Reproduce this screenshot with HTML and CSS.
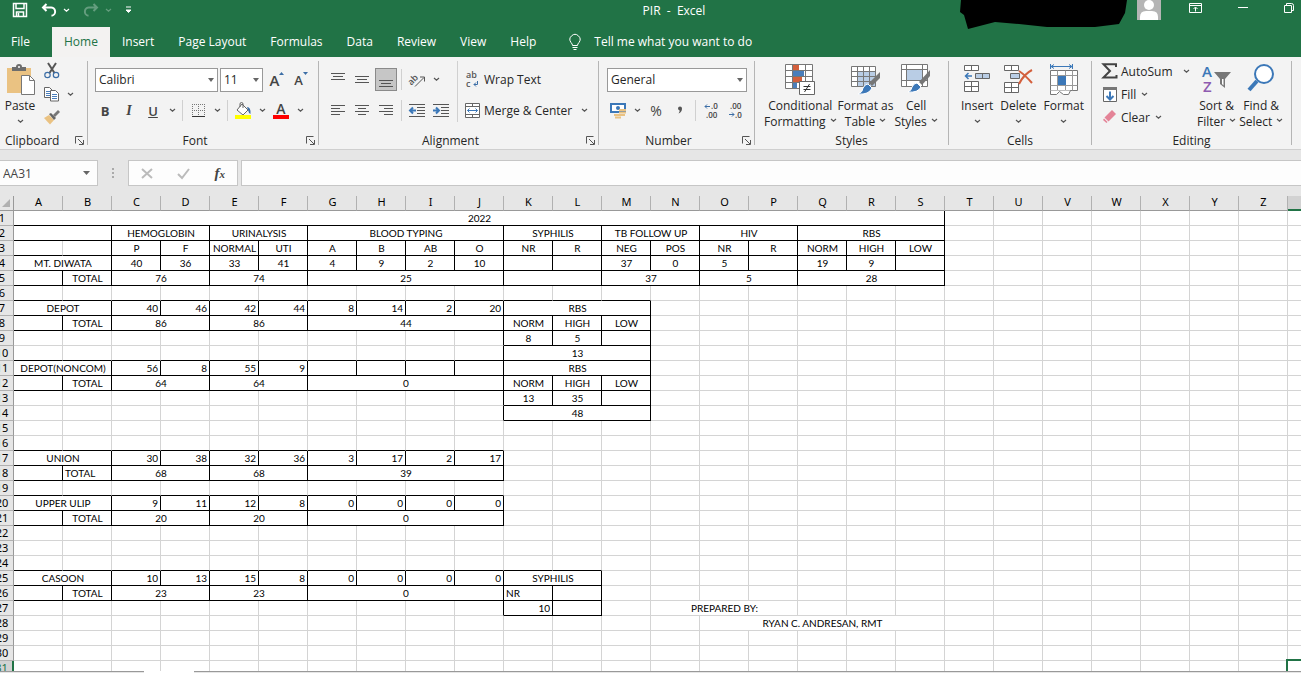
FILE: index.html
```html
<!DOCTYPE html>
<html lang="en">

<head>
    <meta charset="UTF-8">
    <meta name="viewport" content="width=device-width, initial-scale=1.0">
    <title>PIR - Excel</title>
    <link rel="stylesheet" href="styles.css">
</head>

<body>
    <svg class="defs" aria-hidden="true">
        <symbol id="chev" viewBox="0 0 7 5"><path d="M1 1l2.500 2.200L6 1" fill="none" stroke="currentColor" stroke-width="1.200"/></symbol>
        <symbol id="launch" viewBox="0 0 9 9"><path d="M.5 7.500V.5h7M3 3l5 5M8.500 4v4.500H4" fill="none" stroke="#555"/></symbol>
    </svg>

    <header class="titlebar">
        <div class="quick">
            <button class="quick-btn" aria-label="Save"><svg width="16" height="16" viewBox="0 0 16 16"><path d="M1.500 1.500h13v13h-13zM4 1.500v5h8v-5M4.500 14.500V10h7v4.500M6.500 11v3" fill="none" stroke="#fff" stroke-width="1.500"/></svg></button>
            <button class="quick-btn" aria-label="Undo"><svg width="16" height="14" viewBox="0 0 16 14"><path d="M5.500 1L2 4.500 5.500 8M2 4.500h7.500a4 4 0 0 1 1 8.200" fill="none" stroke="#fff" stroke-width="2"/></svg><svg class="chev"><use href="#chev"/></svg></button>
            <button class="quick-btn faded" aria-label="Redo"><svg width="16" height="14" viewBox="0 0 16 14"><path d="M10.500 1L14 4.500 10.500 8M14 4.500H6.500a4 4 0 0 0-1 8.200" fill="none" stroke="#fff" stroke-width="2"/></svg><svg class="chev"><use href="#chev"/></svg></button>
            <button class="quick-btn" aria-label="Customize toolbar"><svg width="7" height="8" viewBox="0 0 7 8"><path d="M1 1h5M1 4h5L3.500 6.500z" fill="#fff" stroke="#fff"/></svg></button>
        </div>
        <h1 class="title">PIR &nbsp;-&nbsp; Excel</h1>
        <div class="account">
            <svg class="scribble" width="168" height="29" viewBox="0 0 168 29"><path d="M1 0h166l-2 13-6 11-24 3H87l-28-3-24-2-27 7-4-14-4-3z"/></svg>
            <svg class="avatar" width="24" height="20" viewBox="0 0 24 20"><path d="M0 0h24v20H0z" fill="#b5b5b5"/><circle cx="12" cy="5" r="5" fill="#fff"/><path d="M3 20v-3q0-6 6-6h6q6 0 6 6v3z" fill="#fff"/></svg>
            <button class="win-btn" aria-label="Ribbon options"><svg width="13" height="10" viewBox="0 0 13 10"><path d="M.5.500h12v9H.5zM.5 2.500h12M6.500 8.500v-4M4.500 6l2-2 2 2" fill="none" stroke="#fff"/></svg></button>
            <button class="win-btn" aria-label="Minimize"><svg width="10" height="10" viewBox="0 0 10 10"><path d="M0 4.500h10" stroke="#fff"/></svg></button>
            <button class="win-btn" aria-label="Restore"><svg width="10" height="10" viewBox="0 0 10 10"><path d="M.5 2.500h7v7h-7zM2.500 2.500v-2h5q2 0 2 2v5h-2" fill="none" stroke="#fff"/></svg></button>
        </div>
    </header>

    <nav class="tabs">
        <a class="tab tab-file" href="#">File</a>
        <a class="tab active" href="#">Home</a>
        <a class="tab" href="#">Insert</a>
        <a class="tab" href="#">Page Layout</a>
        <a class="tab" href="#">Formulas</a>
        <a class="tab" href="#">Data</a>
        <a class="tab" href="#">Review</a>
        <a class="tab" href="#">View</a>
        <a class="tab" href="#">Help</a>
        <a class="tab tell" href="#"><svg width="12" height="16" viewBox="0 0 12 16"><path d="M3.500 11.500q0-1.500-1.500-3a5 5 0 1 1 8 0q-1.500 1.500-1.500 3zM3.500 13.500h5M4.500 15.500h3" fill="none" stroke="#fff"/></svg>Tell me what you want to do</a>
    </nav>

    <section class="ribbon">
        <div class="group clipboard">
            <div class="group-body">
                <button class="big"><svg width="30" height="32" viewBox="-1 0 30 32"><path d="M1 4h24v25H1z" fill="#eac282"/><path d="M6 7V3h4q0-3 3-3t3 3h4v4z" fill="#6d6d6d"/><circle cx="13" cy="3" r="1" fill="#fff"/><path d="M15.500 11.500h8l5 5v14h-13z" fill="#fff" stroke="#777"/><path d="M23.500 11.500v5h5" fill="none" stroke="#777"/></svg><span>Paste</span><svg class="chev"><use href="#chev"/></svg></button>
                <div class="stack">
                    <button class="ico" aria-label="Cut"><svg width="16" height="16" viewBox="0 0 16 16"><path d="M4 0l6.500 10M12 0L5.500 10" stroke="#555" stroke-width="2" fill="none"/><circle cx="3.500" cy="12" r="2.700" fill="none" stroke="#3c6ea6" stroke-width="1.200"/><circle cx="12" cy="12" r="2.700" fill="none" stroke="#3c6ea6" stroke-width="1.200"/></svg></button>
                    <button class="ico" aria-label="Copy"><svg width="16" height="15" viewBox="0 0 16 15"><path d="M.5.500h5l3 3v7h-8z" fill="#fff" stroke="#666"/><path d="M2 4.500h4M2 6.500h4M2 8.500h4" stroke="#4a7ebb"/><path d="M6.500 3.500h5l3 3v7.500h-8z" fill="#fff" stroke="#666"/><path d="M8 7.500h5M8 9.500h5M8 11.500h5" stroke="#4a7ebb"/></svg><svg class="chev"><use href="#chev"/></svg></button>
                    <button class="ico" aria-label="Format Painter"><svg width="16" height="15" viewBox="0 0 16 15"><path d="M0 8l5-3 5 5-4 4.500z" fill="#eac282"/><path d="M5 4l2-1 5 5-2 2z" fill="#666"/><path d="M9 5l5-5 2 2-5 5z" fill="#777"/></svg></button>
                </div>
            </div>
            <div class="group-label"><span>Clipboard</span><button class="launcher" aria-label="Clipboard settings"><svg><use href="#launch"/></svg></button></div>
        </div>

        <div class="group font">
            <div class="group-body rows">
                <div class="row">
                    <label class="combo combo-font"><select aria-label="Font"><option>Calibri</option></select></label>
                    <label class="combo combo-size"><select aria-label="Font size"><option>11</option></select></label>
                    <button class="ico grow" aria-label="Increase font size"><b>A</b><svg width="5" height="4" viewBox="0 0 5 4"><path d="M0 3l2.500-3L5 3z" fill="#3c6ea6"/></svg></button>
                    <button class="ico grow shrink" aria-label="Decrease font size"><b>A</b><svg width="5" height="4" viewBox="0 0 5 4"><path d="M0 0h5L2.500 3z" fill="#3c6ea6"/></svg></button>
                </div>
                <div class="row">
                    <button class="ico glyph"><b>B</b></button>
                    <button class="ico glyph"><i>I</i></button>
                    <button class="ico glyph"><u>U</u></button>
                    <button class="drop" aria-label="Underline options"><svg class="chev"><use href="#chev"/></svg></button>
                    <span class="sep"></span>
                    <button class="ico" aria-label="Borders"><svg width="13" height="13" viewBox="0 0 13 13"><path d="M0 .5h13M0 6.500h13M.5 0v13M6.500 0v13M12.500 0v13" stroke="#777" stroke-dasharray="1 1"/><path d="M0 12.500h13" stroke="#333"/></svg></button>
                    <button class="drop" aria-label="Border options"><svg class="chev"><use href="#chev"/></svg></button>
                    <span class="sep"></span>
                    <button class="ico" aria-label="Fill color"><svg width="17" height="17" viewBox="0 0 17 17"><path d="M7 2l6 6-5 5-6-5z" fill="#fff" stroke="#666"/><path d="M5 5V2q0-1.500 1.500-1.500T8 2v4" fill="none" stroke="#666"/><path d="M12 5q4 0 3.500 7-2-1-2.500-4z" fill="#3c6ea6"/><path d="M0 13h16v4H0z" fill="#ff0"/></svg></button>
                    <button class="drop" aria-label="Fill color options"><svg class="chev"><use href="#chev"/></svg></button>
                    <button class="ico color" aria-label="Font color"><b>A</b></button>
                    <button class="drop" aria-label="Font color options"><svg class="chev"><use href="#chev"/></svg></button>
                </div>
            </div>
            <div class="group-label"><span>Font</span><button class="launcher" aria-label="Font settings"><svg><use href="#launch"/></svg></button></div>
        </div>

        <div class="group alignment">
            <div class="group-body">
                <div class="rows">
                    <div class="row">
                        <button class="ico" aria-label="Top align"><svg width="14" height="15" viewBox="0 0 14 15"><path d="M0 1.500h14M2 4.500h10M0 7.500h14" stroke="#555"/></svg></button>
                        <button class="ico" aria-label="Middle align"><svg width="14" height="15" viewBox="0 0 14 15"><path d="M0 4.500h14M2 7.500h10M0 10.500h14" stroke="#555"/></svg></button>
                        <button class="ico pressed" aria-label="Bottom align"><svg width="14" height="15" viewBox="0 0 14 15"><path d="M0 8.500h14M2 11.500h10M0 14.500h14" stroke="#555"/></svg></button>
                        <span class="sep"></span>
                        <button class="ico" aria-label="Orientation"><svg width="17" height="15" viewBox="0 0 17 15"><text x="-1" y="10" class="abc" transform="rotate(-45 5 8)">ab</text><path d="M6 14.500l9-9M11 5h4.500v4.500" fill="none" stroke="#555"/></svg></button>
                        <button class="drop" aria-label="Orientation options"><svg class="chev"><use href="#chev"/></svg></button>
                    </div>
                    <div class="row">
                        <button class="ico" aria-label="Align left"><svg width="14" height="11" viewBox="0 0 14 11"><path d="M0 .5h14M0 3.500h9M0 6.500h14M0 9.500h9" stroke="#555"/></svg></button>
                        <button class="ico" aria-label="Center"><svg width="14" height="11" viewBox="0 0 14 11"><path d="M0 .5h14M3 3.500h8M0 6.500h14M3 9.500h8" stroke="#555"/></svg></button>
                        <button class="ico" aria-label="Align right"><svg width="14" height="11" viewBox="0 0 14 11"><path d="M0 .5h14M5 3.500h9M0 6.500h14M5 9.500h9" stroke="#555"/></svg></button>
                        <span class="sep"></span>
                        <button class="ico" aria-label="Decrease indent"><svg width="16" height="13" viewBox="0 0 16 13"><path d="M0 .5h16M8 3.500h8M8 6.500h8M8 9.500h8M0 12.500h16" stroke="#555"/><path d="M7 6.500H1M4 3.500l-3 3 3 3" fill="none" stroke="#3c78b8" stroke-width="2"/></svg></button>
                        <button class="ico" aria-label="Increase indent"><svg width="16" height="13" viewBox="0 0 16 13"><path d="M0 .5h16M8 3.500h8M8 6.500h8M8 9.500h8M0 12.500h16" stroke="#555"/><path d="M0 6.500h6M3 3.500l3 3-3 3" fill="none" stroke="#3c78b8" stroke-width="2"/></svg></button>
                    </div>
                </div>
                <div class="rows wraps">
                    <button class="text-btn row"><svg width="16" height="17" viewBox="0 0 16 17"><text x="1" y="7" class="abc">ab</text><text x="1" y="16" class="abc">c</text><path d="M12.500 10v3.500H9M11 11.500l-2 2 2 2" fill="none" stroke="#3c6ea6"/></svg>Wrap Text</button>
                    <button class="text-btn row"><svg width="16" height="15" viewBox="0 0 16 15"><path d="M.5.500h14v14H.5zM.5 3.500h14M.5 11.500h14M7.500.500v3M7.500 11.500v3" fill="#fff" stroke="#666"/><path d="M2.500 7.500h10M4.500 5.500l-2 2 2 2M10.500 5.500l2 2-2 2" fill="none" stroke="#3c78b8"/></svg>Merge &amp; Center<svg class="chev"><use href="#chev"/></svg></button>
                </div>
            </div>
            <div class="group-label"><span>Alignment</span><button class="launcher" aria-label="Alignment settings"><svg><use href="#launch"/></svg></button></div>
        </div>

        <div class="group number">
            <div class="group-body rows">
                <div class="row">
                    <label class="combo combo-number"><select aria-label="Number format"><option>General</option></select></label>
                </div>
                <div class="row">
                    <button class="ico" aria-label="Accounting format"><svg width="17" height="16" viewBox="0 0 17 16"><path d="M1 1h14v8H1z" fill="#fff" stroke="#3c78b8" stroke-width="2"/><circle cx="8" cy="5" r="2" fill="#3c78b8"/><path d="M9 7h7M9 9.500h7M4 12h11M5 14.500h6" stroke="#eac282" stroke-width="2"/></svg></button>
                    <button class="drop" aria-label="Accounting options"><svg class="chev"><use href="#chev"/></svg></button>
                    <button class="ico percent">%</button>
                    <button class="ico" aria-label="Comma style"><svg width="6" height="9" viewBox="0 0 6 9"><path d="M1 2.500a2 2 0 1 1 4 0q0 3.500-3.500 5 1.500-2 1-3.200A2 2 0 0 1 1 2.500z" fill="#555"/></svg></button>
                    <span class="sep"></span>
                    <button class="ico" aria-label="Increase decimal"><svg width="15" height="15" viewBox="0 0 15 15"><text x="7" y="6" class="dec">.0</text><text x="2" y="15" class="dec">.00</text><path d="M6 3.500H1M3 1.500l-2 2 2 2" fill="none" stroke="#3c6ea6"/></svg></button>
                    <button class="ico" aria-label="Decrease decimal"><svg width="15" height="15" viewBox="0 0 15 15"><text x="2" y="6" class="dec">.00</text><text x="7" y="15" class="dec">.0</text><path d="M1 11.500h5M4 9.500l2 2-2 2" fill="none" stroke="#3c6ea6"/></svg></button>
                </div>
            </div>
            <div class="group-label"><span>Number</span><button class="launcher" aria-label="Number settings"><svg><use href="#launch"/></svg></button></div>
        </div>

        <div class="group styles">
            <div class="group-body">
                <button class="big"><svg width="30" height="32" viewBox="0 0 30 32"><path d="M.5.500h27v24H.5z" fill="#fff"/><path d="M8 1h6v6H8zM8 13h9v5H8z" fill="#d35f3c"/><path d="M8 7h11v6H8zM8 19h4v6H8z" fill="#4a7ebb"/><path d="M.5.500h27v24H.5zM.5 6.500h27M.5 12.500h27M.5 18.500h27M7.500.500v24M20.500.500v24" fill="none" stroke="#777"/><path d="M14.500 17.500h15v13h-15z" fill="#fff" stroke="#666"/><path d="M18.500 22.500h7M18.500 25.500h7M24.500 20l-5 8" stroke="#333"/></svg><span>Conditional<br>Formatting<svg class="chev"><use href="#chev"/></svg></span></button>
                <button class="big"><svg width="30" height="32" viewBox="0 0 30 32"><path d="M.5 2.500h24v20H.5z" fill="#fff"/><path d="M7 8h18v15H7z" fill="#b9cde5"/><path d="M.5 2.500h24v20H.5zM.5 7.500h24M.5 12.500h24M.5 17.500h24M6.500 2.500v20M12.500 2.500v20M18.500 2.500v20" fill="none" stroke="#777"/><path d="M29 8v6l-8 8-3-3z" fill="#777"/><path d="M17 20l4 4q-3 7-14 6 5-2 5-6 2-4 5-4z" fill="#3c78b8" stroke="#fff"/></svg><span>Format as<br>Table<svg class="chev"><use href="#chev"/></svg></span></button>
                <button class="big"><svg width="30" height="32" viewBox="0 0 30 32"><path d="M.5.500h26v22H.5z" fill="#fff"/><path d="M6 6h15v10H6z" fill="#b9cde5"/><path d="M.5.500h26v22H.5zM.5 5.500h26M.5 16.500h26M5.500.500v22M21.500.500v22" fill="none" stroke="#777"/><path d="M29 6v6l-8 9-3-3z" fill="#777"/><path d="M16 19l4 4q-3 6-13 5 4-2 4-5 2-4 5-4z" fill="#3c78b8" stroke="#fff"/></svg><span>Cell<br>Styles<svg class="chev"><use href="#chev"/></svg></span></button>
            </div>
            <div class="group-label"><span>Styles</span></div>
        </div>

        <div class="group cells">
            <div class="group-body">
                <button class="big"><svg width="28" height="32" viewBox="0 0 28 32"><path d="M1.500 1.500h14v5h-14zM8.500 1.500v5M1.500 17.500h14v10h-14zM8.500 17.500v10M1.500 22.500h14" fill="#fff" stroke="#666"/><path d="M12.500 9.500h14v5h-14zM19.500 9.500v5" fill="#b9cde5" stroke="#666"/><path d="M9 12H3M5.500 9L2.500 12l3 3" fill="none" stroke="#3c78b8" stroke-width="1.500"/></svg><span>Insert</span><svg class="chev"><use href="#chev"/></svg></button>
                <button class="big"><svg width="30" height="32" viewBox="0 0 30 32"><path d="M1.500 1.500h14v5h-14zM8.500 1.500v5M1.500 18.500h14v10h-14zM8.500 18.500v10M1.500 23.500h14" fill="#fff" stroke="#666"/><path d="M7.500 9.500h9v5h-9z" fill="#b9cde5" stroke="#666"/><path d="M16 7q6 4 13 12M29 6q-8 4-13 14" fill="none" stroke="#d35f3c" stroke-width="2"/></svg><span>Delete</span><svg class="chev"><use href="#chev"/></svg></button>
                <button class="big"><svg width="28" height="32" viewBox="0 0 28 32"><path d="M.5 0v5M22.500 0v5M1 2.500h21M4 .5l-3 2 3 2M19 .5l3 2-3 2" fill="none" stroke="#3c78b8"/><path d="M.5 6.500h27v20H.5z" fill="#fff" stroke="#777"/><path d="M.5 11.500h27M.5 21.500h27M7.500 6.500v20M15.500 6.500v20M22.500 6.500v20" stroke="#999"/><path d="M8 12h8v9H8z" fill="#3c78b8"/><path d="M.5 26.500v4h6l3-3 4 3h5l2-4" fill="#fff" stroke="#777"/></svg><span>Format</span><svg class="chev"><use href="#chev"/></svg></button>
            </div>
            <div class="group-label"><span>Cells</span></div>
        </div>

        <div class="group editing">
            <div class="group-body">
                <div class="edit-list">
                    <button class="text-btn sum"><svg width="16" height="16" viewBox="0 0 16 16"><path d="M14 4V1.200H1.500L8 8l-6.500 6.500H14.500V12" fill="none" stroke="#444" stroke-width="2"/></svg>AutoSum<svg class="chev"><use href="#chev"/></svg></button>
                    <button class="text-btn"><svg width="16" height="16" viewBox="0 0 16 16"><path d="M1.500 1.500h13v14h-13z" fill="#fff" stroke="#666"/><path d="M1 1h14v3H1z" fill="#777"/><path d="M8 5.500v8M4.500 10L8 13.500l3.500-3.500" fill="none" stroke="#3c78b8" stroke-width="2"/></svg>Fill<svg class="chev"><use href="#chev"/></svg></button>
                    <button class="text-btn"><svg width="16" height="16" viewBox="0 0 16 16"><path d="M10 1l4 4-7.500 7.500-4-4z" fill="#e48397"/><path d="M2 9.500l3.500 3.500-1 1-3.500-3z" fill="#e48397"/></svg>Clear<svg class="chev"><use href="#chev"/></svg></button>
                </div>
                <button class="big"><svg width="30" height="32" viewBox="0 0 30 32"><text x="0" y="13" class="az-a">A</text><text x="1" y="28" class="az-z">Z</text><path d="M12 8h17l-6 7v9l-5-4v-5z" fill="#777"/><path d="M20 15v5l1.500 1.500V15z" fill="#fff"/></svg><span>Sort &amp;<br>Filter<svg class="chev"><use href="#chev"/></svg></span></button>
                <button class="big"><svg width="28" height="32" viewBox="0 0 28 32"><circle cx="17" cy="10" r="9" fill="#fff" stroke="#3c78b8" stroke-width="2"/><path d="M10 17L2 26" stroke="#3c78b8" stroke-width="4"/></svg><span>Find &amp;<br>Select<svg class="chev"><use href="#chev"/></svg></span></button>
            </div>
            <div class="group-label"><span>Editing</span></div>
        </div>
    </section>

    <section class="formula-bar">
        <div class="name-box"><input type="text" value="AA31" aria-label="Name box"><svg width="7" height="4" viewBox="0 0 7 4"><path d="M0 0h7L3.500 4z" fill="#666"/></svg></div>
        <svg class="dots" width="2" height="11" viewBox="0 0 2 11"><path d="M0 0h2v2H0zM0 4h2v2H0zM0 8h2v2H0z" fill="#aaa"/></svg>
        <div class="formula-btns">
            <button aria-label="Cancel"><svg width="12" height="11" viewBox="0 0 12 11"><path d="M1 1l10 9M11 1L1 10" stroke="#bbb" stroke-width="2"/></svg></button>
            <button aria-label="Enter"><svg width="13" height="11" viewBox="0 0 13 11"><path d="M1 6l4 4 7-9" fill="none" stroke="#bbb" stroke-width="2"/></svg></button>
            <button class="fx">f<small>x</small></button>
        </div>
        <input class="formula" type="text" aria-label="Formula">
    </section>

    <main class="sheet">
        <table id="grid"></table>
    </main>
    <footer class="sheet-tabs"><span class="sheet-tab"></span></footer>

    <script src="script.js"></script>
</body>

</html>
```

FILE: styles.css
```css
* {
    box-sizing: border-box;
}

body {
    margin: 0;
    height: 100vh;
    display: flex;
    flex-direction: column;
    overflow: hidden;
    background-color: #e6e6e6;
    color: #262626;
    font-family: "Open Sans", "Noto Sans", sans-serif;
    font-size: 12px;
}

button,
input,
select {
    font: inherit;
    color: inherit;
    background: none;
    border: none;
    padding: 0;
    margin: 0;
}

svg {
    display: block;
    flex: none;
    overflow: visible;
}

.defs {
    position: absolute;
    width: 0;
    height: 0;
}

.chev {
    width: 7px;
    height: 5px;
    color: #555;
}

/* title bar */
.titlebar {
    flex: none;
    display: grid;
    grid-template-columns: 388px 1fr 341px;
    height: 27px;
    background-color: #217346;
    color: #fff;
}

.quick {
    display: flex;
    align-items: center;
    height: 20px;
    padding-left: 12px;
    gap: 13px;
}

.quick-btn {
    display: flex;
    align-items: center;
    gap: 6px;
}

.quick .chev {
    color: #fff;
}

.faded {
    opacity: 0.3;
}

.title {
    margin: 0;
    font-size: 12px;
    font-weight: 400;
    line-height: 22px;
    text-align: center;
}

.account {
    display: flex;
    align-items: flex-start;
}

.scribble {
    position: relative;
    margin-right: 9px;
}

.win-btn {
    width: 24px;
    height: 16px;
    display: flex;
    align-items: center;
    justify-content: center;
    margin-left: 23px;
}

/* tabs */
.tabs {
    flex: none;
    display: flex;
    height: 30px;
    background-color: #217346;
}

.tab {
    padding: 0 12px;
    color: #fff;
    line-height: 30px;
    text-decoration: none;
    white-space: nowrap;
}

.tab-file {
    width: 52px;
    padding-left: 11px;
}

.tab.active {
    background-color: #f3f2f1;
    color: #217346;
}

.tell {
    display: flex;
    align-items: center;
    gap: 13px;
    padding-left: 21px;
}

/* ribbon */
.ribbon {
    flex: none;
    display: flex;
    height: 93px;
    background-color: #f3f3f3;
    border-bottom: 1px solid #cfcfcf;
}

.group {
    flex: none;
    display: flex;
    flex-direction: column;
    justify-content: space-between;
    margin: 4px 0;
    border-right: 1px solid #b5b5b5;
}

.clipboard { width: 88px; }
.font { width: 231px; }
.alignment { width: 280px; }
.number { width: 156px; }
.styles { width: 194px; }
.cells { width: 143px; }
.editing { width: 200px; }

.group-body {
    display: flex;
    height: 68px;
}

.group-label {
    display: flex;
    align-items: center;
    height: 9px;
    line-height: 16px;
}

.group-label span {
    flex: 1;
    text-align: center;
}

.clipboard .group-label span {
    text-align: left;
    padding-left: 5px;
}

.launcher {
    width: 16px;
}

.launcher svg {
    width: 9px;
    height: 9px;
    margin-left: 4px;
}

.big {
    display: flex;
    flex-direction: column;
    align-items: center;
    padding-top: 3px;
    line-height: 16px;
    white-space: nowrap;
}

.big span {
    padding-top: 2px;
}

.big span .chev {
    display: inline-block;
    margin: 0 0 3px 4px;
}

.big > .chev {
    margin-top: 5px;
}

.stack {
    display: flex;
    flex-direction: column;
    gap: 7px;
    padding: 2px 0 0 5px;
}

.stack .ico {
    width: 32px;
    height: 16px;
    justify-content: flex-start;
    gap: 7px;
}

.clipboard .big {
    width: 38px;
    margin-left: 1px;
}

.rows {
    display: flex;
    flex-direction: column;
    gap: 8px;
    padding-top: 7px;
}

.row {
    display: flex;
    align-items: center;
    height: 23px;
}

.ico {
    position: relative;
    width: 24px;
    height: 23px;
    display: flex;
    align-items: center;
    justify-content: center;
    color: #444;
}

.drop {
    width: 14px;
    height: 23px;
    display: flex;
    align-items: center;
    justify-content: center;
}

.sep {
    width: 1px;
    height: 21px;
    margin: 0 3px;
    background-color: #d0d0d0;
}

.pressed {
    width: 22px;
    margin: 0 1px;
    background-color: #c6c6c6;
    border: 1px solid #8a8a8a;
}

.font .row {
    padding-left: 5px;
}

.alignment .row {
    padding-left: 7px;
}

.combo {
    position: relative;
    display: block;
    height: 24px;
}

.combo select {
    width: 100%;
    height: 100%;
    padding: 0 3px;
    appearance: none;
    background-color: #fff;
    border: 1px solid #999;
}

.combo::after {
    content: "";
    position: absolute;
    right: 4px;
    top: 10px;
    border: 3px solid transparent;
    border-top: 4px solid #666;
    border-bottom: none;
}

.combo-font {
    width: 123px;
    margin: 0 2px;
}

.combo-size {
    width: 43px;
    margin-right: 2px;
}

.combo-number {
    width: 140px;
    margin-left: 8px;
}

.grow {
    align-items: center;
    font-size: 15px;
    font-weight: 400;
}

.grow b {
    font-weight: 600;
}

.grow svg {
    margin-bottom: 12px;
}

.shrink {
    font-size: 13px;
}

.glyph {
    font-size: 13px;
}

.glyph i {
    font-family: "Liberation Serif", serif;
    font-size: 14px;
    font-weight: 700;
}

.glyph u {
    font-weight: 600;
}

.color b {
    width: 16px;
    border-bottom: 4px solid #f00;
    font-size: 14px;
    font-weight: 600;
    line-height: 12px;
}

.alignment .wraps {
    height: 61px;
    border-left: 1px solid #d0d0d0;
    margin-left: 4px;
}

.text-btn {
    display: flex;
    align-items: center;
    gap: 3px;
    white-space: nowrap;
}

.wraps .chev {
    margin-left: 6px;
}

.number .row + .row {
    padding-left: 7px;
}

.percent {
    font-size: 14px;
}

.abc {
    font: 600 9px "Open Sans", sans-serif;
    fill: #555;
}

.dec {
    font: 600 8px "Open Sans", sans-serif;
    fill: #444;
}

.az-a,
.az-z {
    font: 600 15px "Open Sans", sans-serif;
    fill: #3c78b8;
}

.az-z {
    fill: #8e5bb0;
}

.styles .group-body {
    padding-left: 9px;
    gap: 1px;
}

.cells .group-body {
    padding-left: 12px;
    gap: 7px;
}

.editing .group-body {
    padding-left: 10px;
    gap: 3px;
}

.edit-list {
    display: flex;
    flex-direction: column;
    gap: 7px;
    width: 92px;
    padding-top: 2px;
}

.edit-list .text-btn {
    height: 16px;
}

.edit-list .chev {
    margin-left: 2px;
}

.edit-list .sum .chev {
    margin-left: 7px;
}

/* formula bar */
.formula-bar {
    flex: none;
    display: flex;
    align-items: center;
    height: 46px;
    color: #444;
}

.name-box {
    display: flex;
    align-items: center;
    width: 98px;
    height: 26px;
    padding-right: 7px;
    background-color: #fdfdfd;
    border: 1px solid #c6c6c6;
    border-left: none;
}

.name-box input {
    flex: 1;
    min-width: 0;
    padding-left: 3px;
}

.dots {
    margin: 0 14px;
}

.formula-btns {
    display: flex;
    align-items: center;
    justify-content: space-around;
    width: 110px;
    height: 26px;
    background-color: #fdfdfd;
    border: 1px solid #c6c6c6;
}

.fx {
    font: italic 700 15px "Liberation Serif", serif;
}

.fx small {
    font-size: 11px;
}

.formula {
    flex: 1;
    height: 26px;
    margin-left: 3px;
    padding: 0 4px;
    background-color: #fdfdfd;
    border: 1px solid #c6c6c6;
    border-right: none;
}

/* sheet */
.sheet {
    flex: 1;
    min-height: 0;
    overflow: hidden;
}

#grid {
    width: 1346px;
    margin-left: -9px;
    table-layout: fixed;
    border-collapse: separate;
    border-spacing: 0;
    background-color: #fff;
    color: #000;
    font-family: Lato, sans-serif;
    font-size: 10px;
    line-height: 14px;
}

#grid th,
#grid td {
    width: 49px;
    height: 15px;
    padding: 0 2px;
    white-space: nowrap;
    border-right: 1px solid #d4d4d4;
    border-bottom: 1px solid #d4d4d4;
}

#grid th {
    padding: 0;
    background-color: #e6e6e6;
    font-family: "Noto Sans", sans-serif;
    font-size: 11px;
    font-weight: 400;
    border-color: #b1b1b1;
}

#grid thead th {
    padding: 0 0 2px 1px;
    line-height: 12px;
    border-bottom-color: #999;
}

#grid th:first-child {
    width: 23px;
    border-right-color: #999;
}

#grid .corner svg {
    margin: 2px 0 0 10px;
}

#grid td.left { text-align: left; }
#grid td.center { text-align: center; padding: 0 0 0 1px; }
#grid td.right { text-align: right; }
#grid td.line-right { border-right-color: #000; }
#grid td.line-bottom { border-bottom-color: #000; }

#grid th.current {
    background-color: #d2d2d2;
    color: #217346;
}

#grid thead th.current {
    border-bottom: 2px solid #217346;
}

#grid tbody th.current {
    border-right: 2px solid #217346;
}

#grid td.selected {
    position: relative;
}

#grid td.selected::before {
    content: "";
    position: absolute;
    inset: -2px;
    border: 2px solid #217346;
}

.sheet-tabs {
    flex: none;
    height: 2px;
    border-top: 1px solid #999;
    padding-left: 144px;
}

.sheet-tab {
    display: block;
    width: 50px;
    height: 2px;
    margin-top: -1px;
    background-color: #fff;
}
```

FILE: script.js
```js
const ROWS = 31;
const COLS = 27;

// row: [first column, number of columns, text, alignment]
const cells = {
    1: [["A", 19, "2022"]],
    2: [["A", 2, ""], ["C", 2, "HEMOGLOBIN"], ["E", 2, "URINALYSIS"], ["G", 4, "BLOOD TYPING"], ["K", 2, "SYPHILIS"], ["M", 2, "TB FOLLOW UP"], ["O", 2, "HIV"], ["Q", 3, "RBS"]],
    3: [["C", 1, "P"], ["D", 1, "F"], ["E", 1, "NORMAL"], ["F", 1, "UTI"], ["G", 1, "A"], ["H", 1, "B"], ["I", 1, "AB"], ["J", 1, "O"], ["K", 1, "NR"], ["L", 1, "R"], ["M", 1, "NEG"], ["N", 1, "POS"], ["O", 1, "NR"], ["P", 1, "R"], ["Q", 1, "NORM"], ["R", 1, "HIGH"], ["S", 1, "LOW"]],
    4: [["A", 2, "MT. DIWATA"], ["C", 1, "40"], ["D", 1, "36"], ["E", 1, "33"], ["F", 1, "41"], ["G", 1, "4"], ["H", 1, "9"], ["I", 1, "2"], ["J", 1, "10"], ["K", 1, ""], ["L", 1, ""], ["M", 1, "37"], ["N", 1, "0"], ["O", 1, "5"], ["P", 1, ""], ["Q", 1, "19"], ["R", 1, "9"], ["S", 1, ""]],
    5: [["A", 1, ""], ["B", 1, "TOTAL"], ["C", 2, "76"], ["E", 2, "74"], ["G", 4, "25"], ["K", 2, ""], ["M", 2, "37"], ["O", 2, "5"], ["Q", 3, "28"]],
    7: [["A", 2, "DEPOT"], ...numbers([40, 46, 42, 44, 8, 14, 2, 20]), ["K", 3, "RBS"]],
    8: [...totals(86, 86, 44), ["K", 1, "NORM"], ["L", 1, "HIGH"], ["M", 1, "LOW"]],
    9: [["K", 1, "8"], ["L", 1, "5"], ["M", 1, ""]],
    10: [["K", 3, "13"]],
    11: [["A", 2, "DEPOT(NONCOM)"], ...numbers([56, 8, 55, 9, "", "", "", ""]), ["K", 3, "RBS"]],
    12: [...totals(64, 64, 0), ["K", 1, "NORM"], ["L", 1, "HIGH"], ["M", 1, "LOW"]],
    13: [["K", 1, "13"], ["L", 1, "35"], ["M", 1, ""]],
    14: [["K", 3, "48"]],
    17: [["A", 2, "UNION"], ...numbers([30, 38, 32, 36, 3, 17, 2, 17])],
    18: totals(68, 68, 39, "left"),
    20: [["A", 2, "UPPER ULIP"], ...numbers([9, 11, 12, 8, 0, 0, 0, 0])],
    21: totals(20, 20, 0),
    25: [["A", 2, "CASOON"], ...numbers([10, 13, 15, 8, 0, 0, 0, 0]), ["K", 2, "SYPHILIS"]],
    26: [...totals(23, 23, 0), ["K", 1, "NR", "left"], ["L", 1, ""]],
    27: [["K", 1, "10", "right"], ["L", 1, ""], ["N", 3, "PREPARED BY:", "center", true]],
    28: [["O", 5, "RYAN C. ANDRESAN, RMT", "center", true]]
};

function numbers(values) {
    return values.map((value, i) => ["CDEFGHIJ"[i], 1, value, "right"]);
}

function totals(hemoglobin, urinalysis, blood, align) {
    return [["A", 1, ""], ["B", 1, "TOTAL", align], ["C", 2, hemoglobin], ["E", 2, urinalysis], ["G", 4, blood]];
}

function colName(c) {
    return c < 26 ? String.fromCharCode(65 + c) : "A" + String.fromCharCode(39 + c);
}

// collect the black lines; a cell's top and left lines belong to its neighbours
const right = new Set();
const bottom = new Set();
for (const r in cells) {
    cells[r].forEach(([name, span, , , plain]) => {
        if (plain) return;
        const c = name.charCodeAt(0) - 65;
        right.add(r + ":" + (c - 1)).add(r + ":" + (c + span - 1));
        for (let i = c; i < c + span; i++) {
            bottom.add(r + ":" + i).add((r - 1) + ":" + i);
        }
    });
}

let html = '<thead><tr><th class="corner"><svg width="8" height="8" viewBox="0 0 8 8"><path d="M8 0v8H0z" fill="#b1b1b1"/></svg></th>';
for (let c = 0; c < COLS; c++) {
    html += c === 26 ? '<th class="current"></th>' : `<th>${colName(c)}</th>`;
}
html += "</tr></thead><tbody>";

for (let r = 1; r <= ROWS; r++) {
    html += `<tr><th${r === ROWS ? ' class="current"' : ""}>${r}</th>`;
    let c = 0;
    while (c < COLS) {
        const cell = (cells[r] || []).find(item => item[0] === colName(c));
        const span = cell ? cell[1] : 1;
        const classes = [cell && cell[3] || "center"];
        if (right.has(r + ":" + (c + span - 1))) classes.push("line-right");
        if (bottom.has(r + ":" + c)) classes.push("line-bottom");
        if (r === ROWS && c === 26) classes.push("selected");
        html += `<td class="${classes.join(" ")}" colspan="${span}">${cell ? cell[2] : ""}</td>`;
        c += span;
    }
    html += "</tr>";
}
document.getElementById("grid").innerHTML = html + "</tbody>";
```
